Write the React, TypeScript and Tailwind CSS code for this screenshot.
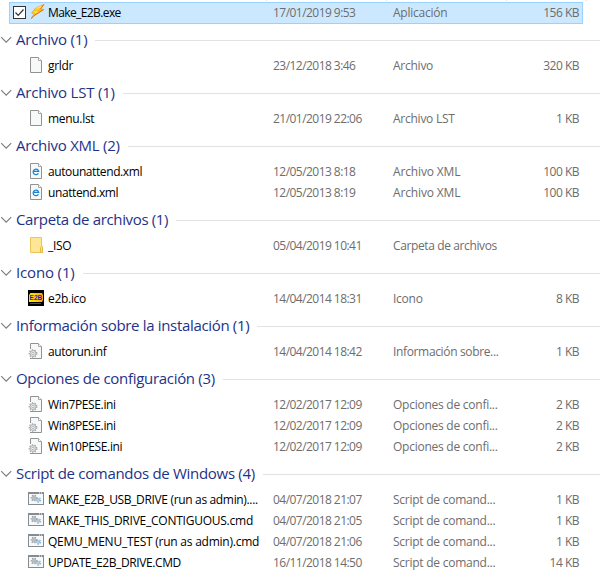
import type { ReactNode } from 'react';

type Kind = 'exe' | 'file' | 'xml' | 'folder' | 'ico' | 'gear' | 'cmd';
type Item = { name: string; nameCls?: string; date: string; type: string; typeCls?: string; size: string; kind: Kind };
type Group = { title: string; titleCls?: string; items: Item[] };

function Page({ children }: { children?: ReactNode }) {
  return (
    <svg width="16" height="16" viewBox="0 0 16 16" className="block">
      <path d="M2.5 .5h8l3 3v12h-11z" fill="#f7f8f8" stroke="#929292" />
      <path d="M10.5 .5v3h3" fill="#fff" stroke="#a6a6a6" />
      {children}
    </svg>
  );
}

function Gear({ x, y, r, color }: { x: number; y: number; r: number; color: string }) {
  return (
    <g transform={`translate(${x} ${y})`} fill="none" stroke={color}>
      <circle r={r + 0.8} strokeWidth="1.1" strokeDasharray="1.4 1.3" />
      <circle r={r} strokeWidth=".8" fill="#e6e8ea" />
      <circle r={r * 0.4} strokeWidth=".7" fill="#fff" />
    </g>
  );
}

function Icon({ kind }: { kind: Kind }) {
  switch (kind) {
    case 'exe':
      return (
        <svg width="16" height="16" viewBox="0 0 16 16" className="block">
          <defs>
            <linearGradient id="bolt" x1="0" y1="0" x2="1" y2="1">
              <stop offset="0" stopColor="#ffd51e" />
              <stop offset=".5" stopColor="#ffc414" />
              <stop offset="1" stopColor="#f58a12" />
            </linearGradient>
          </defs>
          <path d="M5.2 4.4 13.8 .4 10.4 5l3.4.4L5 11 1 14.6 4.4 9.4 1.6 9z" fill="url(#bolt)" stroke="#f39a28" strokeWidth=".7" />
          <path d="M13.8 .6 10.6 5M13.7 5.6 5 11 1.2 14.4" fill="none" stroke="#dd5a22" strokeWidth=".8" />
          <path d="M6.6 4.6 11.4 2.4M4.2 8.3 7.6 8" stroke="#ffee58" strokeWidth="1.1" />
        </svg>
      );
    case 'file':
      return <Page />;
    case 'xml':
      return (
        <Page>
          <path d="M10.4 10.3A2.8 2.8 0 1 1 10.7 8.3H6" fill="none" stroke="#1683d8" strokeWidth="1.3" />
        </Page>
      );
    case 'gear':
      return (
        <Page>
          <path d="M0 6h6l3 3v4l-2 1.8H0z" fill="#fff" />
          <path d="M2 15.5h11" stroke="#929292" />
          <Gear x={5} y={10.5} r={3} color="#9a9fa4" />
        </Page>
      );
    case 'folder':
      return (
        <svg width="16" height="16" viewBox="0 0 16 16" className="block">
          <path d="M2.5 .5h11v9h1v6h-12z" fill="#ffe694" stroke="#e9c65b" />
          <path d="M12.5 15.5v-5l1-1 1 1v5z" fill="#ffdf7d" stroke="#e2ba48" />
        </svg>
      );
    case 'ico':
      return (
        <svg width="16" height="16" viewBox="0 0 16 16" className="block">
          <defs>
            <linearGradient id="badge" x1="0" y1="0" x2="1" y2="0">
              <stop offset="0" stopColor="#ffee00" />
              <stop offset="1" stopColor="#ffa414" />
            </linearGradient>
          </defs>
          <rect width="16" height="16" fill="#000" />
          <path d="M2.5 3H14l1 2v5l-1 2H1V5z" fill="url(#badge)" />
          <path d="M2 13.5h11" stroke="#665000" />
          <text x="1.6" y="10.2" textLength="12.5" lengthAdjust="spacingAndGlyphs" className="font-['Liberation_Sans',sans-serif] text-[7px] font-bold" fill="#1a1fc0">E2B</text>
        </svg>
      );
    case 'cmd':
      return (
        <svg width="16" height="16" viewBox="0 0 16 16" className="block">
          <rect x=".5" y="1.5" width="15" height="12" fill="#f7f8f8" stroke="#858b90" />
          <path d="M0 2h16" stroke="#858b90" strokeWidth="2" />
          <path d="M11 2h1M13 2h1" stroke="#fff" />
          <Gear x={6} y={7} r={2} color="#959a9e" />
          <Gear x={10.3} y={9} r={1.5} color="#86b6d9" />
        </svg>
      );
  }
}

const groups: Group[] = [
  { title: 'Archivo (1)', titleCls: 'tracking-[-0.2px]', items: [{ name: 'grldr', date: '23/12/2018 3:46', type: 'Archivo', size: '320 KB', kind: 'file' }] },
  { title: 'Archivo LST (1)', titleCls: 'tracking-[-0.2px]', items: [{ name: 'menu.lst', date: '21/01/2019 22:06', type: 'Archivo LST', size: '1 KB', kind: 'file' }] },
  {
    title: 'Archivo XML (2)',
    titleCls: 'tracking-[-0.25px]',
    items: [
      { name: 'autounattend.xml', nameCls: 'tracking-[-0.4px]', date: '12/05/2013 8:18', type: 'Archivo XML', typeCls: 'tracking-[-0.15px]', size: '100 KB', kind: 'xml' },
      { name: 'unattend.xml', nameCls: 'tracking-[-0.4px]', date: '12/05/2013 8:19', type: 'Archivo XML', typeCls: 'tracking-[-0.15px]', size: '100 KB', kind: 'xml' },
    ],
  },
  { title: 'Carpeta de archivos (1)', titleCls: 'tracking-[-0.35px]', items: [{ name: '_ISO', date: '05/04/2019 10:41', type: 'Carpeta de archivos', typeCls: 'tracking-[-0.38px]', size: '', kind: 'folder' }] },
  { title: 'Icono (1)', titleCls: 'tracking-[-0.15px]', items: [{ name: 'e2b.ico', date: '14/04/2014 18:31', type: 'Icono', size: '8 KB', kind: 'ico' }] },
  { title: 'Información sobre la instalación (1)', titleCls: 'tracking-[-0.33px]', items: [{ name: 'autorun.inf', nameCls: 'tracking-[-0.4px]', date: '14/04/2014 18:42', type: 'Información sobre...', typeCls: 'tracking-[-0.35px]', size: '1 KB', kind: 'gear' }] },
  {
    title: 'Opciones de configuración (3)',
    items: [
      { name: 'Win7PESE.ini', nameCls: 'tracking-[-0.36px]', date: '12/02/2017 12:09', type: 'Opciones de confi...', size: '2 KB', kind: 'gear' },
      { name: 'Win8PESE.ini', nameCls: 'tracking-[-0.36px]', date: '12/02/2017 12:09', type: 'Opciones de confi...', size: '2 KB', kind: 'gear' },
      { name: 'Win10PESE.ini', nameCls: 'tracking-[-0.36px]', date: '12/02/2017 12:09', type: 'Opciones de confi...', size: '2 KB', kind: 'gear' },
    ],
  },
  {
    title: 'Script de comandos de Windows (4)',
    items: [
      { name: 'MAKE_E2B_USB_DRIVE (run as admin)....', nameCls: 'tracking-[-0.34px]', date: '04/07/2018 21:07', type: 'Script de comand...', size: '1 KB', kind: 'cmd' },
      { name: 'MAKE_THIS_DRIVE_CONTIGUOUS.cmd', nameCls: 'tracking-[-0.24px]', date: '04/07/2018 21:05', type: 'Script de comand...', size: '1 KB', kind: 'cmd' },
      { name: 'QEMU_MENU_TEST (run as admin).cmd', nameCls: 'tracking-[-0.24px]', date: '04/07/2018 21:06', type: 'Script de comand...', size: '1 KB', kind: 'cmd' },
      { name: 'UPDATE_E2B_DRIVE.CMD', nameCls: 'tracking-[-0.4px]', date: '16/11/2018 14:50', type: 'Script de comand...', size: '14 KB', kind: 'cmd' },
    ],
  },
];

function Cells({ item }: { item: Item }) {
  return (
    <>
      <span className={`w-[225px] shrink-0 text-black ${item.nameCls ?? 'tracking-[-0.3px]'}`}>{item.name}</span>
      <span className="w-[120px] shrink-0 tracking-[-0.54px]">{item.date}</span>
      <span className={`w-[120px] shrink-0 ${item.typeCls ?? 'tracking-[-0.25px]'}`}>{item.type}</span>
      <span className="w-[66px] shrink-0 text-right tracking-[-0.5px]">{item.size}</span>
    </>
  );
}

function Row({ item }: { item: Item }) {
  return (
    <div className="flex h-[21px] items-start pt-px pl-7">
      <div className="w-5 shrink-0"><Icon kind={item.kind} /></div>
      <Cells item={item} />
    </div>
  );
}

export default function App() {
  return (
    <main className="h-[575px] w-[600px] overflow-hidden bg-white font-['Open_Sans','Noto_Sans',sans-serif] text-[12px] leading-[17px] whitespace-nowrap text-[#6d6d6d]">
      <div className="flex h-px pl-[266px]">
        <i className="mr-[119px] w-px bg-[#e5e5e5]" />
        <i className="mr-[119px] w-px bg-[#e5e5e5]" />
        <i className="mr-[79px] w-px bg-[#e5e5e5]" />
        <i className="w-px bg-[#e5e5e5]" />
      </div>
      <div className="mt-px ml-[9px] flex h-[22px] w-[574px] items-start border border-[#99d1ff] bg-[#cce8ff] pt-px pl-[3px]">
        <svg width="13" height="13" viewBox="0 0 13 13" className="mt-0.5 mr-1 shrink-0">
          <rect x=".5" y=".5" width="12" height="12" fill="#fff" stroke="#333" />
          <path d="m2.5 6.5 2.7 2.8 5.3-5.8" fill="none" stroke="#333" strokeWidth="1.2" />
        </svg>
        <div className="w-[18px] shrink-0"><Icon kind="exe" /></div>
        <Cells item={{ name: 'Make_E2B.exe', nameCls: 'tracking-[-0.6px]', date: '17/01/2019 9:53', type: 'Aplicación', size: '156 KB', kind: 'exe' }} />
      </div>
      {groups.map((g) => (
        <section key={g.title}>
          <header className="flex h-8 items-center">
            <svg width="12" height="8" viewBox="0 0 12 8" className="mr-1 shrink-0">
              <path d="m1.2 1.2 5 5 5-5" fill="none" stroke="#7a7a7a" strokeWidth="1.1" />
            </svg>
            <h2 className={`pb-0.5 text-[15px] leading-5 text-[#1e3287] ${g.titleCls ?? 'tracking-[-0.3px]'}`}>{g.title}</h2>
            <div className="ml-2 h-px flex-1 bg-[#e2e2e2]" />
          </header>
          {g.items.map((item) => <Row key={item.name} item={item} />)}
        </section>
      ))}
    </main>
  );
}
